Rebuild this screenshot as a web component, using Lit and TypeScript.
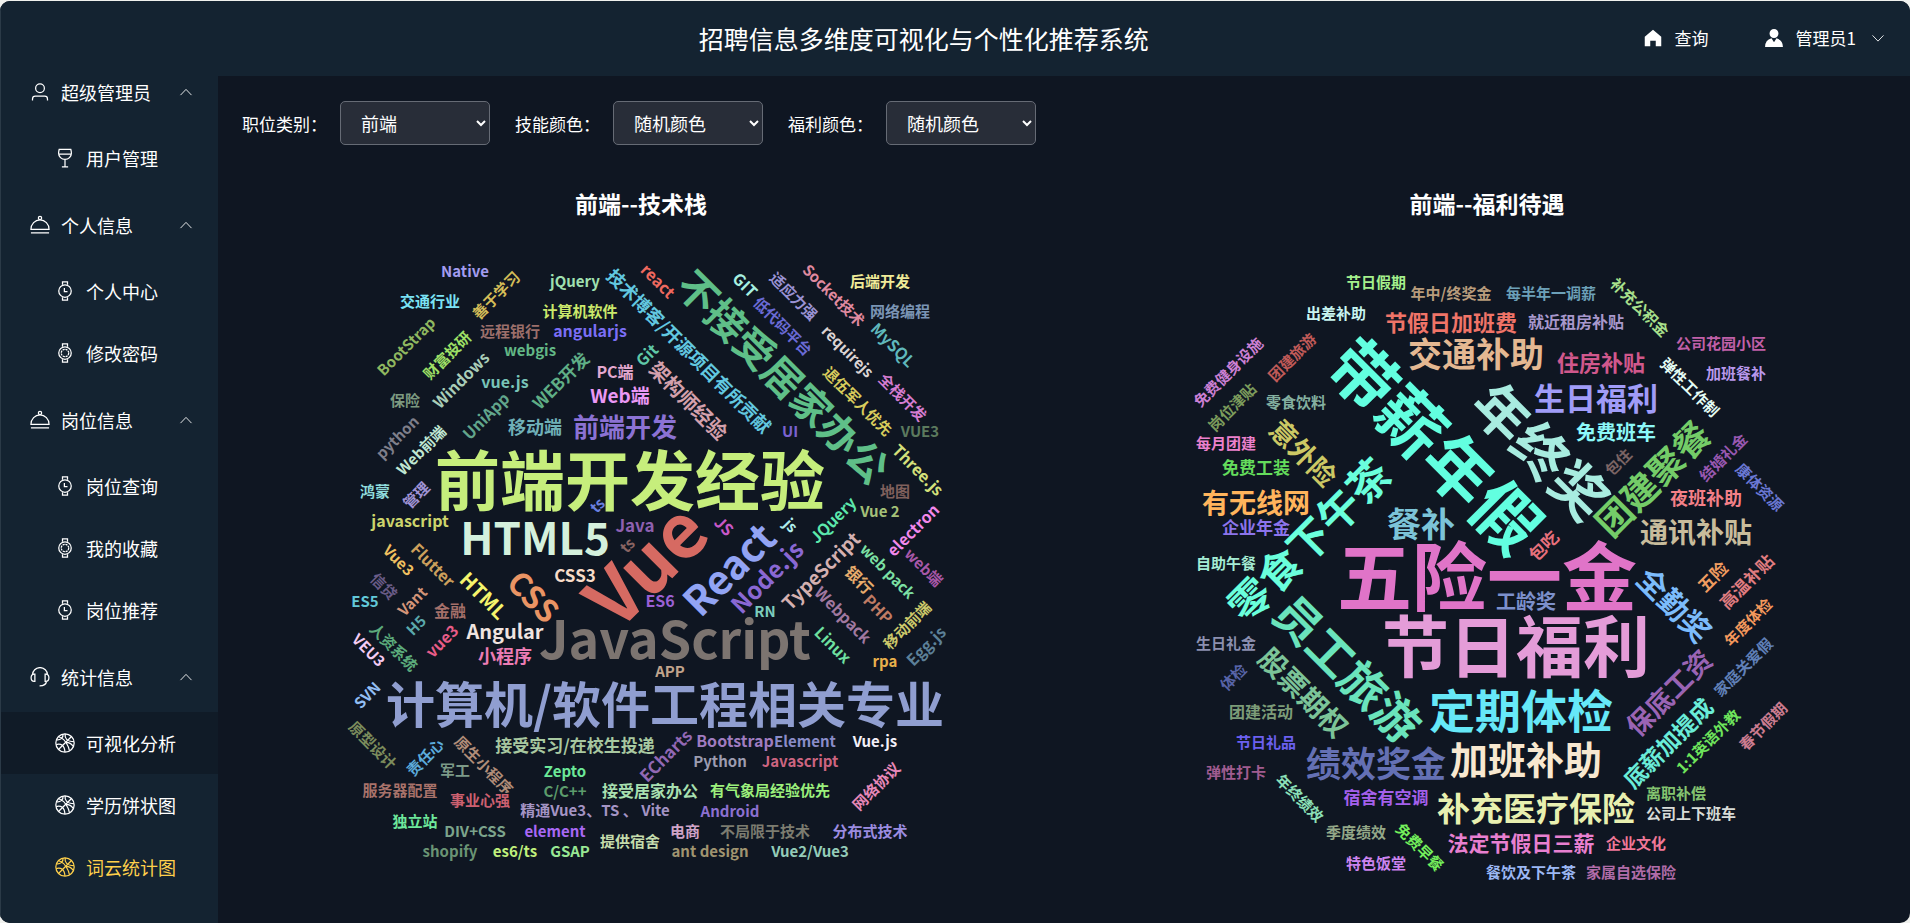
import { LitElement, html, svg, css } from "lit";
import { customElement, state } from "lit/decorators.js";
import { classMap } from "lit/directives/class-map.js";

type Word = [text: string, x: number, y: number, size: number, angle: number, color: string];

const SKILLS: Word[] = [
  ["前端开发经验", 630, 481, 65, 0, "#c6ee7c"],
  ["计算机/软件工程相关专业", 665, 705, 49, 0, "#909ed0"],
  ["Vue", 646, 565, 75, -45, "#d66a62"],
  ["JavaScript", 675, 640, 52, 0, "#7c7470"],
  ["HTML5", 535, 539, 44, 0, "#d4f0dc"],
  ["React", 729, 569, 40, -45, "#92a4f4"],
  ["不接受居家办公", 783, 377, 40, 45, "#5fbf88"],
  ["CSS", 533, 597, 31, 45, "#ea9464"],
  ["前端开发", 625, 427, 26, 0, "#8b72d4"],
  ["Node.js", 767, 577, 24, -45, "#8a68d4"],
  ["架构师经验", 688, 401, 20, 45, "#d4a0ac"],
  ["Web端", 620, 396, 19, 0, "#ea98f5"],
  ["Angular", 505, 632, 20, 0, "#f0e4e0"],
  ["技术博客/开源项目有所贡献", 689, 351, 18, 45, "#62c8e0"],
  ["TypeScript", 821, 571, 19, -45, "#d4b0b0"],
  ["HTML", 483, 596, 20, 45, "#f4f46c"],
  ["移动端", 535, 427, 18, 0, "#6fb0b8"],
  ["小程序", 505, 656, 18, 0, "#ec7cb4"],
  ["接受实习/在校生投递", 575, 746, 17, 0, "#a8c8a0"],
  ["WEB开发", 561, 381, 17, -45, "#5fae86"],
  ["CSS3", 575, 576, 17, 0, "#f8dcc8"],
  ["ECharts", 666, 756, 17, -45, "#9268b4"],
  ["Java", 635, 526, 17, 0, "#8e60b0"],
  ["vue.js", 505, 382, 16, 0, "#78c4b8"],
  ["接受居家办公", 650, 791, 16, 0, "#a8e0b0"],
  ["Native", 465, 271, 15, 0, "#a29cf0"],
  ["交通行业", 430, 301, 15, 0, "#7be3f5"],
  ["善于学习", 496, 295, 15, -45, "#d4bd58"],
  ["jQuery", 575, 281, 15, 0, "#a0e0b0"],
  ["计算机软件", 580, 311, 15, 0, "#cbe86b"],
  ["远程银行", 510, 331, 15, 0, "#9c6f6b"],
  ["angularjs", 590, 331, 16, 0, "#7b6ef5"],
  ["webgis", 530, 350, 15, 0, "#62b886"],
  ["BootStrap", 406, 346, 15, -45, "#8fb860"],
  ["财富投研", 447, 355, 15, -45, "#9ee066"],
  ["Windows", 461, 380, 16, -45, "#a9cdb8"],
  ["保险", 405, 400, 15, 0, "#7c9a80"],
  ["UniApp", 486, 416, 16, -45, "#62a68c"],
  ["python", 397, 437, 15, -45, "#7f7f8a"],
  ["Web前端", 421, 450, 15, -45, "#bfe6d2"],
  ["PC端", 615, 372, 16, 0, "#e3a8d0"],
  ["Git", 647, 355, 16, -45, "#5fc8a8"],
  ["react", 658, 281, 16, 45, "#f0695f"],
  ["GIT", 745, 285, 16, 45, "#a8f0e0"],
  ["适应力强", 794, 296, 15, 45, "#9a92d4"],
  ["低代码平台", 783, 326, 15, 45, "#6a6ad4"],
  ["Socket技术", 834, 295, 15, 45, "#e08aa0"],
  ["后端开发", 880, 281, 15, 0, "#f0eb98"],
  ["网络编程", 900, 311, 15, 0, "#7a94b4"],
  ["requirejs", 848, 351, 15, 45, "#dcd4d4"],
  ["MySQL", 893, 345, 16, 45, "#5fb8bc"],
  ["全栈开发", 903, 397, 15, 45, "#d47cd0"],
  ["退伍军人优先", 858, 401, 15, 45, "#d8cc5c"],
  ["VUE3", 920, 431, 15, 0, "#5c7a5e"],
  ["UI", 790, 431, 15, 0, "#7b62d0"],
  ["Three.js", 918, 470, 16, 45, "#d4e07a"],
  ["鸿蒙", 375, 491, 15, 0, "#8fdcdc"],
  ["管理", 416, 495, 15, -45, "#9f92d4"],
  ["javascript", 410, 521, 16, 0, "#ccd46c"],
  ["Vue3", 399, 560, 15, 45, "#f0c060"],
  ["Flutter", 433, 565, 16, 45, "#cca05c"],
  ["ts", 597, 505, 15, -45, "#6a80e0"],
  ["ts", 627, 545, 15, -45, "#8a6462"],
  ["ES5", 365, 601, 15, 0, "#62c8d8"],
  ["信贷", 384, 586, 15, 45, "#6a5c88"],
  ["Vant", 412, 601, 15, -45, "#d49478"],
  ["金融", 450, 611, 16, 0, "#a4706a"],
  ["H5", 416, 625, 15, -45, "#5aa8ac"],
  ["vue3", 442, 641, 16, -45, "#e85c88"],
  ["人资系统", 394, 647, 15, 45, "#5cac7c"],
  ["VEU3", 369, 650, 15, 45, "#f4ccf4"],
  ["JS", 724, 526, 16, 45, "#c858c8"],
  ["js", 791, 525, 15, 45, "#b0ecec"],
  ["JQuery", 833, 520, 16, -45, "#5ce8ac"],
  ["Vue 2", 880, 511, 15, 0, "#a4c078"],
  ["地图", 895, 491, 15, 0, "#80605c"],
  ["electron", 913, 530, 16, -45, "#f488ec"],
  ["web端", 924, 567, 15, 45, "#a858a8"],
  ["web pack", 888, 571, 15, 45, "#7ce0a4"],
  ["银行", 859, 580, 16, 45, "#e8ac6c"],
  ["PHP", 878, 609, 16, 45, "#c07c64"],
  ["Webpack", 843, 615, 16, 45, "#a078a0"],
  ["Linux", 833, 645, 16, 45, "#6ee0a0"],
  ["移动前端", 907, 625, 15, -45, "#ccc86a"],
  ["Egg.js", 926, 646, 16, -45, "#5c8098"],
  ["rpa", 885, 661, 15, 0, "#e8b04c"],
  ["RN", 765, 611, 15, 0, "#7cccbc"],
  ["ES6", 660, 601, 16, 0, "#9a60d4"],
  ["APP", 670, 671, 15, 0, "#c0a48c"],
  ["SVN", 367, 695, 15, -45, "#92bef4"],
  ["原型设计", 373, 745, 15, 45, "#7c8c5c"],
  ["责任心", 425, 757, 15, -45, "#5cacdc"],
  ["军工", 455, 770, 15, 0, "#7c9a88"],
  ["原生小程序", 484, 765, 15, 45, "#b08c78"],
  ["服务器配置", 400, 790, 15, 0, "#a8726a"],
  ["事业心强", 480, 800, 15, 0, "#cc6070"],
  ["Bootstrap", 735, 741, 16, 0, "#a07cc0"],
  ["Element", 805, 741, 15, 0, "#8a8cc8"],
  ["Vue.js", 875, 741, 15, 0, "#f4f0f8"],
  ["Python", 720, 761, 15, 0, "#9c9cb0"],
  ["Javascript", 800, 761, 15, 0, "#cc6480"],
  ["Zepto", 565, 771, 15, 0, "#6ce898"],
  ["C/C++", 565, 791, 15, 0, "#5c9c6c"],
  ["有气象局经验优先", 770, 790, 15, 0, "#9cf07c"],
  ["精通Vue3、TS 、 Vite", 595, 810, 15, 0, "#a494c4"],
  ["Android", 730, 811, 15, 0, "#8c70d0"],
  ["网络协议", 876, 786, 15, -45, "#e888b8"],
  ["独立站", 415, 821, 15, 0, "#6ee89c"],
  ["DIV+CSS", 475, 831, 15, 0, "#7ca48c"],
  ["element", 555, 831, 15, 0, "#a868f4"],
  ["提供宿舍", 630, 841, 15, 0, "#c4dcac"],
  ["电商", 685, 831, 15, 0, "#d0a4c8"],
  ["不局限于技术", 765, 831, 15, 0, "#7c7c70"],
  ["分布式技术", 870, 831, 15, 0, "#9c8ce0"],
  ["shopify", 450, 851, 15, 0, "#6a9474"],
  ["es6/ts", 515, 851, 15, 0, "#c0f07c"],
  ["GSAP", 570, 851, 15, 0, "#98e894"],
  ["ant design", 710, 851, 15, 0, "#a09470"],
  ["Vue2/Vue3", 810, 851, 15, 0, "#94ccb8"],
];

const BENEFITS: Word[] = [
  ["五险一金", 1487, 577, 75, 0, "#e074c8"],
  ["节日福利", 1516, 647, 67, 0, "#e49cd8"],
  ["带薪年假", 1435, 446, 67, 45, "#62ffe0"],
  ["年终奖", 1540, 452, 55, 45, "#a8ece0"],
  ["定期体检", 1521, 711, 46, 0, "#66e8f8"],
  ["员工旅游", 1347, 669, 46, 45, "#6ae4bc"],
  ["零食下午茶", 1309, 540, 42, -45, "#6affdc"],
  ["加班补助", 1526, 760, 38, 0, "#f8e8d0"],
  ["绩效奖金", 1376, 764, 35, 0, "#6470b4"],
  ["交通补助", 1476, 354, 34, 0, "#e4b892"],
  ["团建聚餐", 1653, 479, 36, -45, "#74cc68"],
  ["餐补", 1421, 524, 34, 0, "#7cc4d8"],
  ["补充医疗保险", 1536, 809, 33, 0, "#e8f0b0"],
  ["生日福利", 1596, 399, 31, 0, "#a09cf8"],
  ["全勤奖", 1674, 605, 30, 45, "#7cbcfc"],
  ["通讯补贴", 1696, 533, 28, 0, "#c8bc9c"],
  ["有无线网", 1256, 503, 27, 0, "#ffb45c"],
  ["股票期权", 1303, 693, 28, 45, "#7cc498"],
  ["保底工资", 1669, 693, 27, -45, "#9a64b4"],
  ["意外险", 1303, 453, 27, 45, "#ccc864"],
  ["住房补贴", 1601, 363, 22, 0, "#d0588c"],
  ["节假日加班费", 1451, 323, 22, 0, "#f07468"],
  ["底薪加提成", 1668, 743, 23, -45, "#6aecd8"],
  ["法定节假日三薪", 1521, 843, 21, 0, "#e880d0"],
  ["免费班车", 1616, 433, 20, 0, "#8cf8f8"],
  ["工龄奖", 1526, 602, 20, 0, "#7c90cc"],
  ["夜班补助", 1706, 498, 18, 0, "#f48088"],
  ["免费工装", 1256, 468, 17, 0, "#64dc5c"],
  ["企业年金", 1256, 528, 17, 0, "#8c74ec"],
  ["包吃", 1544, 546, 17, -45, "#e8707c"],
  ["高温补贴", 1747, 582, 17, -45, "#e07c80"],
  ["宿舍有空调", 1386, 798, 17, 0, "#a460ec"],
  ["五险", 1713, 577, 17, -45, "#f09c60"],
  ["就近租房补贴", 1576, 322, 16, 0, "#a898cc"],
  ["团建活动", 1261, 712, 16, 0, "#7c9c78"],
  ["节日假期", 1376, 282, 15, 0, "#a4f08c"],
  ["年中/终奖金", 1451, 293, 15, 0, "#b89c7c"],
  ["每半年一调薪", 1551, 293, 15, 0, "#6ca0b8"],
  ["出差补助", 1336, 313, 15, 0, "#c8f4f0"],
  ["补充公积金", 1640, 307, 15, 45, "#a8e08c"],
  ["公司花园小区", 1721, 343, 15, 0, "#c060a8"],
  ["加班餐补", 1736, 373, 15, 0, "#b898ec"],
  ["弹性工作制", 1690, 387, 15, 45, "#e4fcf4"],
  ["免费健身设施", 1228, 372, 15, -45, "#cc80d4"],
  ["团建旅游", 1292, 357, 15, -45, "#c05a58"],
  ["岗位津贴", 1232, 407, 15, -45, "#7c9c5c"],
  ["零食饮料", 1296, 402, 15, 0, "#84b0a0"],
  ["每月团建", 1226, 443, 15, 0, "#ec80cc"],
  ["包住", 1618, 462, 15, -45, "#7c6464"],
  ["结婚礼金", 1723, 457, 15, -45, "#9858b0"],
  ["康体资源", 1760, 487, 15, 45, "#6a78d4"],
  ["自助午餐", 1226, 563, 15, 0, "#a4ecd4"],
  ["生日礼金", 1226, 643, 15, 0, "#8c90b0"],
  ["体检", 1233, 677, 15, -45, "#5864a8"],
  ["节日礼品", 1266, 742, 15, 0, "#6c60f0"],
  ["弹性打卡", 1236, 772, 15, 0, "#a05c90"],
  ["年终绩效", 1300, 798, 15, 45, "#8ce0b8"],
  ["季度绩效", 1356, 832, 15, 0, "#94a888"],
  ["免费早餐", 1420, 847, 15, 45, "#74f05c"],
  ["特色饭堂", 1376, 863, 15, 0, "#cc84f0"],
  ["年度体检", 1748, 622, 15, -45, "#f4985c"],
  ["家庭关爱假", 1743, 667, 15, -45, "#6080b8"],
  ["1:1英语外教", 1708, 741, 15, -45, "#6ee45c"],
  ["春节假期", 1763, 726, 15, -45, "#cc7c90"],
  ["离职补偿", 1676, 793, 15, 0, "#84c470"],
  ["公司上下班车", 1691, 813, 15, 0, "#d8dcd8"],
  ["企业文化", 1636, 843, 15, 0, "#f07898"],
  ["餐饮及下午茶", 1531, 872, 15, 0, "#9cb8f4"],
  ["家属自选保险", 1631, 872, 15, 0, "#b06ca8"],
];

const ICONS: Record<string, unknown> = {
  user: svg`<circle cx="512" cy="320" r="224"/><path d="M128 944v-80a144 144 0 0 1 144-144h480a144 144 0 0 1 144 144v80"/>`,
  goblet: svg`<path d="M216 64h592c16 60 32 130 32 200a328 320 0 0 1-656 0c0-70 16-140 32-200zM186 310h652M512 584v370M352 960h320"/>`,
  dish: svg`<circle cx="512" cy="150" r="84"/><path d="M48 740a464 490 0 0 1 928 0zM48 912h928"/>`,
  watch: svg`<circle cx="512" cy="512" r="320"/><path d="M480 352v192h160M384 192V48h256v144M384 832v144h256V832"/>`,
  stone: svg`<circle cx="512" cy="512" r="320"/><circle cx="512" cy="512" r="190" stroke-dasharray="110 39"/><path d="M384 192V48h256v144M384 832v144h256V832"/>`,
  headset: svg`<path d="M128 400a384 370 0 0 1 768 0M250 360v370h-34a160 185 0 0 1 0-370zM774 360v370h34a160 185 0 0 0 0-370zM850 725c-20 160-130 240-360 240"/>`,
  ball: svg`<circle cx="512" cy="512" r="470"/><path d="M180 180c150 60 300 170 400 330s150 260 160 400M845 180L180 845M410 60c10 180-80 300-330 300M520 45c-30 220 80 390 450 400M60 590c260-60 420 40 450 380M560 480c130 0 280 60 360 200"/>`,
  up: svg`<path d="M110 740L512 320l402 420"/>`,
  down: svg`<path d="M110 320l402 420 402-420"/>`,
  home: svg`<path class="solid" d="M512 128L128 448v448h256V640h256v256h256V448z"/>`,
  avatar: svg`<path class="solid" d="M628.7 528.9A416 416 0 0 1 928 928H96a416 416 0 0 1 299.3-399.1L512 704zM720 304a208 208 0 1 1-416 0 208 208 0 0 1 416 0"/>`,
};

const MENU = [
  { icon: "user", label: "超级管理员", items: [["goblet", "用户管理"]] },
  { icon: "dish", label: "个人信息", items: [["watch", "个人中心"], ["stone", "修改密码"]] },
  { icon: "dish", label: "岗位信息", items: [["watch", "岗位查询"], ["stone", "我的收藏"], ["watch", "岗位推荐"]] },
  { icon: "headset", label: "统计信息", items: [["ball", "可视化分析"], ["ball", "学历饼状图"], ["ball", "词云统计图"]] },
];

const FILTERS = [
  { id: "job", label: "职位类别：", options: ["前端", "后端", "测试"] },
  { id: "skill", label: "技能颜色：", options: ["随机颜色", "单一颜色"] },
  { id: "welfare", label: "福利颜色：", options: ["随机颜色", "单一颜色"] },
];

const icon = (name: string, extra = "") =>
  html`<svg class="icon ${extra}" viewBox="0 0 1024 1024" aria-hidden="true">${ICONS[name]}</svg>`;

@customElement("word-cloud")
export class WordCloud extends LitElement {
  static properties = { heading: {}, words: { attribute: false }, left: { type: Number } };
  declare heading: string;
  declare words: Word[];
  declare left: number;

  static styles = css`
    :host { display: block; min-width: 0; }
    .heading { margin: 0 0 2px; font-size: 23px; line-height: 30px; font-weight: 700; text-align: center; color: #fff; }
    .canvas { display: block; width: 100%; }
    .word { font-weight: 700; text-anchor: middle; white-space: pre; }
  `;

  render() {
    return html`
      <h2 class="heading">${this.heading}</h2>
      <svg class="canvas" viewBox="${this.left} 220 846 680" role="img" aria-label=${this.heading}>
        ${this.words.map(
          ([text, x, y, size, angle, color]) => svg`<text class="word" y=${Math.round(size * 0.37)}
            font-size=${size} fill=${color} transform="translate(${x} ${y}) rotate(${angle})">${text}</text>`
        )}
      </svg>
    `;
  }
}

@customElement("app-root")
export class AppRoot extends LitElement {
  @state() private active = "词云统计图";
  @state() private hovered = "可视化分析";

  static styles = css`
    :host {
      display: block;
      background: #f0f1ee;
      padding-top: 1px;
      font-family: "Noto Sans CJK SC", "Noto Sans", sans-serif;
      color: #fff;
    }
    * { box-sizing: border-box; }
    .shell {
      display: grid;
      grid-template: 75px 1fr / 218px 1fr;
      min-height: calc(100vh - 1px);
      border-radius: 10px;
      overflow: hidden;
      background: #0f1622;
    }
    .side { grid-row: 1 / 3; padding-top: 55px; background: #142331; border-left: 1px solid #2b3a47; }
    .icon { width: 20px; height: 20px; flex: none; fill: none; stroke: currentColor; stroke-width: 64; }
    .icon .solid { fill: currentColor; stroke: none; }
    .icon.large { width: 22px; height: 22px; }
    .icon.small { width: 14px; height: 14px; }
    .group, .item {
      display: flex; align-items: center; width: 100%; font: inherit; font-size: 18px;
      color: inherit; text-decoration: none; white-space: nowrap;
    }
    .group { height: 71px; padding: 0 25px 0 29px; gap: 11px; border: 0; background: none; text-align: left; cursor: pointer; }
    .group .text { flex: 1; }
    .item { height: 62px; padding-left: 54px; gap: 11px; }
    .item.hovered { background: #101b27; }
    .item.active { color: #ffd04b; }
    .header { display: flex; align-items: center; padding-bottom: 2px; background: #142331; }
    .title { flex: 1; margin: 0; font-size: 25px; font-weight: 400; text-align: center; }
    .tools { display: flex; align-items: center; gap: 54px; padding: 0 25px 0 12px; font-size: 17px; }
    .tool { display: flex; align-items: center; gap: 11px; padding: 0; border: 0; background: none; color: inherit; font: inherit; text-decoration: none; }
    .tool .small { margin-left: 4px; }
    .main { padding-top: 25px; min-width: 0; }
    .filters { display: flex; flex-wrap: wrap; gap: 25px; padding: 0 24px; }
    .filter { display: flex; align-items: center; gap: 13px; font-size: 17px; }
    .select {
      width: 150px; height: 44px; padding: 0 0 0 16px; border: 1px solid #666b75; border-radius: 5px;
      background: #282d38; color: #fff; font: inherit; font-size: 18px;
    }
    .charts { display: grid; grid-template-columns: 1fr 1fr; padding-top: 43px; }
  `;

  render() {
    return html`
      <div class="shell">
        <nav class="side">
          ${MENU.map(
            (g) => html`
              <button class="group" type="button" aria-expanded="true">
                ${icon(g.icon)}<span class="text">${g.label}</span>${icon("up", "small")}
              </button>
              ${g.items.map(
                ([glyph, label]) => html`<a
                  href="#"
                  class=${classMap({ item: true, active: this.active === label, hovered: this.hovered === label })}
                  @click=${(e: Event) => { e.preventDefault(); this.active = label; }}
                  >${icon(glyph)}<span>${label}</span></a
                >`
              )}
            `
          )}
        </nav>
        <header class="header">
          <h1 class="title">招聘信息多维度可视化与个性化推荐系统</h1>
          <div class="tools">
            <a class="tool" href="#">${icon("home", "large")}<span>查询</span></a>
            <button class="tool" type="button">${icon("avatar", "large")}<span>管理员1</span>${icon("down", "small")}</button>
          </div>
        </header>
        <main class="main">
          <form class="filters">
            ${FILTERS.map(
              (f) => html`<div class="filter">
                <label for=${f.id}>${f.label}</label>
                <select class="select" id=${f.id}>
                  ${f.options.map((o) => html`<option>${o}</option>`)}
                </select>
              </div>`
            )}
          </form>
          <div class="charts">
            <word-cloud .heading=${"前端--技术栈"} .words=${SKILLS} .left=${218}></word-cloud>
            <word-cloud .heading=${"前端--福利待遇"} .words=${BENEFITS} .left=${1064}></word-cloud>
          </div>
        </main>
      </div>
    `;
  }
}
